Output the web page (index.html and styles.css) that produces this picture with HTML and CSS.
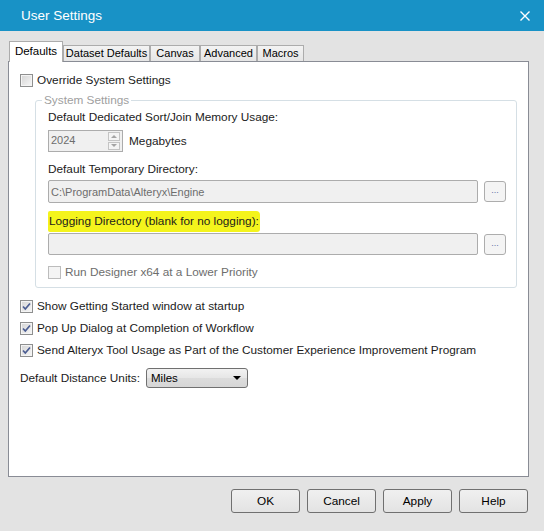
FILE: index.html
```html
<!DOCTYPE html>
<html lang="en">
<head>
  <meta charset="UTF-8">
  <title>User Settings</title>
  <link rel="stylesheet" href="styles.css">
</head>
<body>

<div class="titlebar">
  <span class="title">User Settings</span>
  <svg class="close" width="10" height="10" viewBox="0 0 10 10">
    <path d="M0.5 0.5 L9.5 9.5 M9.5 0.5 L0.5 9.5" stroke="#fff" stroke-width="1.4"/>
  </svg>
</div>

<div class="dialog">
  <div class="tabs">
    <div class="tab active w-defaults">Defaults</div>
    <div class="tab w-dataset">Dataset Defaults</div>
    <div class="tab w-canvas">Canvas</div>
    <div class="tab w-advanced">Advanced</div>
    <div class="tab w-macros">Macros</div>
  </div>

  <div class="panel">
    <div class="check-row">
      <span class="box"></span>
      <span>Override System Settings</span>
    </div>

    <fieldset class="group">
      <legend>System Settings</legend>
      <div class="label">Default Dedicated Sort/Join Memory Usage:</div>
      <div class="spin-row">
        <div class="spin">
          <span class="spin-val">2024</span>
          <div class="spin-btns">
            <span class="spin-btn"><i class="tri up"></i></span>
            <span class="spin-btn"><i class="tri dn"></i></span>
          </div>
        </div>
        <span>Megabytes</span>
      </div>

      <div class="label gap-top">Default Temporary Directory:</div>
      <div class="path-row">
        <div class="field">C:\ProgramData\Alteryx\Engine</div>
        <div class="browse">...</div>
      </div>

      <div class="label gap-top2"><span class="marker">Logging Directory (blank for no logging):</span></div>
      <div class="path-row log">
        <div class="field"></div>
        <div class="browse">...</div>
      </div>

      <div class="check-row sub disabled">
        <span class="box"></span>
        <span>Run Designer x64 at a Lower Priority</span>
      </div>
    </fieldset>

    <div class="check-row first">
      <span class="box checked">
        <svg width="11" height="11" viewBox="0 0 11 11"><path d="M2 5.5 L4.3 8 L9 2.5" fill="none" stroke="#4b5d92" stroke-width="1.7"/></svg>
      </span>
      <span>Show Getting Started window at startup</span>
    </div>
    <div class="check-row next">
      <span class="box checked">
        <svg width="11" height="11" viewBox="0 0 11 11"><path d="M2 5.5 L4.3 8 L9 2.5" fill="none" stroke="#4b5d92" stroke-width="1.7"/></svg>
      </span>
      <span>Pop Up Dialog at Completion of Workflow</span>
    </div>
    <div class="check-row next">
      <span class="box checked">
        <svg width="11" height="11" viewBox="0 0 11 11"><path d="M2 5.5 L4.3 8 L9 2.5" fill="none" stroke="#4b5d92" stroke-width="1.7"/></svg>
      </span>
      <span>Send Alteryx Tool Usage as Part of the Customer Experience Improvement Program</span>
    </div>

    <div class="units-row">
      <span class="units-label">Default Distance Units:</span>
      <div class="select">
        <span>Miles</span>
        <i class="arrow"></i>
      </div>
    </div>
  </div>

  <div class="buttons">
    <div class="btn">OK</div>
    <div class="btn">Cancel</div>
    <div class="btn">Apply</div>
    <div class="btn">Help</div>
  </div>
</div>

</body>
</html>
```

FILE: styles.css
```css
body{
  margin: 0;
  width: 544px;
  height: 531px;
  background: #e3e3e3;
  font-family: "Liberation Sans", Arial, sans-serif;
  font-size: 11.8px;
  color: #1b1b1b;
  overflow: hidden;
}

/* title bar */
.titlebar{
  height: 31px;
  background: #1892c6;
  display: flex;
  align-items: center;
  padding-left: 21px;
  padding-right: 14px;
}
.title{
  flex: 1;
  color: #fff;
  font-size: 13.5px;
}
.close{
  display: block;
}

.dialog{
  padding-top: 10px;
}

/* tabs */
.tabs{
  display: flex;
  align-items: flex-end;
  height: 20px;
  padding-left: 9px;
  font-size: 11px;
}
.tab{
  box-sizing: border-box;
  height: 16px;
  border: 1px solid #acacac;
  border-bottom: none;
  background: linear-gradient(#f3f3f3, #e5e5e5);
  text-align: center;
  line-height: 15px;
  color: #000;
}
.tab.active{
  height: 21px;
  margin-bottom: -1px;
  position: relative;
  z-index: 1;
  background: #fff;
  line-height: 19px;
  font-size: 11.5px;
}
.w-defaults{ width: 54px; }
.w-dataset{ width: 87px; }
.w-canvas{ width: 50px; }
.w-advanced{ width: 57px; }
.w-macros{ width: 47px; }

/* panel */
.panel{
  box-sizing: border-box;
  margin-left: 8px;
  width: 521px;
  height: 416px;
  background: #fff;
  border: 1px solid #898c95;
  padding: 10px 0 0 11px;
}

.check-row{
  display: flex;
  align-items: center;
  height: 16px;
  gap: 4px;
}
.box{
  box-sizing: border-box;
  width: 13px;
  height: 13px;
  border: 1px solid #8e8f8f;
  background: linear-gradient(135deg, #d4d4d4, #f7f7f7);
  box-shadow: inset 0 0 0 1px #f4f4f4;
  display: flex;
  align-items: center;
  justify-content: center;
}
.check-row.disabled{
  color: #6d6d6d;
}
.check-row.disabled .box{
  border-color: #bcbcbc;
  background: #f4f4f4;
}
.check-row.sub{
  margin-top: 9px;
}
.check-row.first{
  margin-top: 10px;
}
.check-row.next{
  margin-top: 6px;
}

/* system settings group */
.group{
  box-sizing: border-box;
  width: 482px;
  margin: 4px 0 0 15px;
  padding: 1px 10px 7px 12px;
  border: 1px solid #d5dfe5;
  border-radius: 3px;
}
.group legend{
  color: #a0a0a0;
  padding: 0 2px;
  margin-left: -6px;
  line-height: 16px;
}
.label{
  line-height: 16px;
}
.label.gap-top{
  margin-top: 9px;
}
.label.gap-top2{
  margin-top: 10px;
}
.marker{
  background: #f4f41c;
  padding: 3px 1px 4px;
  border-radius: 2px 4px 3px 2px;
}

.spin-row{
  display: flex;
  align-items: center;
  gap: 6px;
  margin-top: 5px;
}
.spin{
  box-sizing: border-box;
  width: 75px;
  height: 22px;
  border: 1px solid #acacac;
  background: #f0f0f0;
  display: flex;
  justify-content: space-between;
  padding: 1px 1px 1px 2px;
}
.spin-val, .field{
  font-size: 11px;
  color: #6d6d6d;
}
.spin-val{
  padding-top: 2px;
}
.spin-btns{
  display: flex;
  flex-direction: column;
  gap: 1px;
  width: 12px;
  margin-right: 1px;
}
.spin-btn{
  flex: 1;
  border: 1px solid #c4c4c4;
  background: #f4f4f4;
  display: flex;
  align-items: center;
  justify-content: center;
}
.tri{
  width: 0;
  height: 0;
  border-left: 3px solid transparent;
  border-right: 3px solid transparent;
}
.tri.up{ border-bottom: 3px solid #a4a4a4; }
.tri.dn{ border-top: 3px solid #a4a4a4; }

.path-row{
  display: flex;
  align-items: center;
  gap: 6px;
  height: 23px;
  margin-top: 3px;
}
.path-row.log{
  height: 22px;
  margin-top: 4px;
}
.field{
  box-sizing: border-box;
  width: 430px;
  height: 100%;
  border: 1px solid #acacac;
  border-radius: 2px;
  background: #f0f0f0;
  padding-left: 2px;
  display: flex;
  align-items: center;
}
.browse{
  box-sizing: border-box;
  width: 22px;
  height: 21px;
  border: 1px solid #adadad;
  border-radius: 3px;
  background: #f4f4f4;
  color: #6673a8;
  font-size: 9px;
  text-align: center;
  line-height: 16px;
}

/* distance units */
.units-row{
  display: flex;
  align-items: center;
  height: 20px;
  margin-top: 10px;
}
.units-label{
  width: 126px;
  flex-shrink: 0;
}
.select{
  box-sizing: border-box;
  width: 102px;
  height: 20px;
  border: 1px solid #707070;
  border-radius: 3px;
  background: linear-gradient(#f2f2f2, #e6e6e6 50%, #dcdcdc 51%, #d6d6d6);
  display: flex;
  align-items: center;
  justify-content: space-between;
  padding: 0 6px 0 4px;
  font-size: 11.5px;
  color: #000;
}
.arrow{
  width: 0;
  height: 0;
  border-left: 4px solid transparent;
  border-right: 4px solid transparent;
  border-top: 4px solid #000;
}

/* bottom buttons */
.buttons{
  display: flex;
  justify-content: flex-end;
  gap: 7px;
  padding-right: 16px;
  margin-top: 12px;
}
.btn{
  box-sizing: border-box;
  width: 69px;
  height: 24px;
  border: 1px solid #707070;
  border-radius: 3px;
  background: linear-gradient(#f0f0f0, #e3e3e3);
  text-align: center;
  line-height: 22px;
  color: #000;
}
```
